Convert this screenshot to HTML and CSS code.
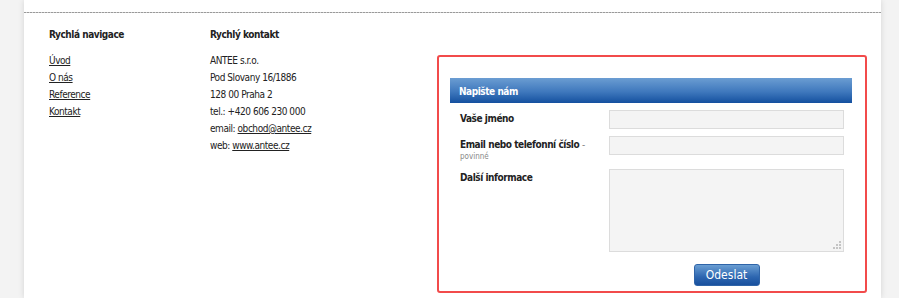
FILE: index.html
```html
<!DOCTYPE html>
<html lang="cs">
<head>
<meta charset="utf-8">
<title>Patička</title>
<link rel="stylesheet" href="styles.css">
</head>
<body>
<div class="page">
  <div class="rule"></div>
  <div class="footer">
    <div class="col col-nav">
      <h3 class="col-title">Rychlá navigace</h3>
      <ul class="list">
        <li><a href="#">Úvod</a></li>
        <li><a href="#">O nás</a></li>
        <li><a href="#">Reference</a></li>
        <li><a href="#">Kontakt</a></li>
      </ul>
    </div>
    <div class="col col-contact">
      <h3 class="col-title">Rychlý kontakt</h3>
      <ul class="list">
        <li>ANTEE s.r.o.</li>
        <li>Pod Slovany 16/1886</li>
        <li>128 00 Praha 2</li>
        <li>tel.: +420 606 230 000</li>
        <li>email: <a href="#">obchod@antee.cz</a></li>
        <li>web: <a href="#">www.antee.cz</a></li>
      </ul>
    </div>
    <div class="form-box">
      <div class="form-head">Napište nám</div>
      <form class="form">
        <label class="lbl" for="f1">Vaše jméno</label>
        <input class="inp" id="f1" type="text">
        <label class="lbl" for="f2">Email nebo telefonní číslo <span class="dash">-</span><span class="req">povinné</span></label>
        <input class="inp" id="f2" type="text">
        <label class="lbl" for="f3">Další informace</label>
        <div class="area-wrap">
          <textarea class="area" id="f3"></textarea>
          <svg class="grip" width="8" height="8" viewBox="0 0 8 8" aria-hidden="true">
            <rect x="6" y="0" width="2" height="2"/>
            <rect x="3" y="3" width="2" height="2"/>
            <rect x="6" y="3" width="2" height="2"/>
            <rect x="0" y="6" width="2" height="2"/>
            <rect x="3" y="6" width="2" height="2"/>
            <rect x="6" y="6" width="2" height="2"/>
          </svg>
        </div>
        <div class="actions"><button class="btn" type="button">Odeslat</button></div>
      </form>
    </div>
  </div>
</div>
</body>
</html>
```

FILE: styles.css
```css
html, body {
  margin: 0;
  padding: 0;
}
body {
  background: #f3f3f3;
  font-family: "DejaVu Sans Condensed", "DejaVu Sans", sans-serif;
  font-stretch: condensed;
  font-size: 10px;
  letter-spacing: -0.45px;
  color: #222;
  height: 298px;
  overflow: hidden;
}
.page {
  margin: 0 18px 0 24px;
  background: #fff;
  height: 298px;
  padding-top: 12px;
  box-sizing: border-box;
  box-shadow: 0 0 6px rgba(0, 0, 0, 0.13);
}
.rule {
  height: 1px;
  background: repeating-linear-gradient(to right, #9a9a9a 0 2px, #d0d0d0 2px 3px);
}
.footer {
  display: flex;
  padding: 0 14px 0 25px;
}
.col-nav { width: 161px; }
.col-contact { width: 200px; }
.col-title {
  margin: 13px 0 9px;
  font-size: 10px;
  font-weight: bold;
  line-height: 17px;
}
.list {
  list-style: none;
  margin: 0;
  padding: 0;
  line-height: 17px;
}
.list a { color: #222; text-decoration: underline; }
.form-box {
  margin: 42px 0 0 auto;
  width: 430px;
  box-sizing: border-box;
  border: 2px solid #f24b4b;
  border-radius: 3px;
  padding: 21px 13px 5px 11px;
}
.form-head {
  height: 25px;
  box-sizing: border-box;
  padding: 3px 0 0 9px;
  line-height: 22px;
  color: #fff;
  font-weight: bold;
  font-size: 10px;
  background: linear-gradient(#6b9dd2, #3f78bd 55%, #14509f);
  margin-bottom: 7px;
}
.form {
  display: grid;
  grid-template-columns: 159px 235px;
  row-gap: 7px;
}
.lbl {
  padding: 2px 0 0 10px;
  font-weight: bold;
  line-height: 13px;
}
.dash { font-weight: normal; color: #888; }
.req {
  display: block;
  font-weight: normal;
  font-size: 8px;
  letter-spacing: 0;
  line-height: 11px;
  color: #888;
}
.inp, .area {
  box-sizing: border-box;
  border: 1px solid #dcdcdc;
  background: #f4f4f4;
  margin: 0;
  padding: 0;
  width: 235px;
  display: block;
}
.inp { height: 19px; }
.area-wrap {
  position: relative;
  width: 235px;
  height: 83px;
}
.area { height: 83px; resize: none; }
.grip {
  position: absolute;
  right: 3px;
  bottom: 3px;
  fill: #c4c4c4;
}
.actions {
  grid-column: 2;
  display: flex;
  justify-content: center;
  margin-top: 5px;
}
.btn {
  width: 66px;
  height: 22px;
  padding: 0;
  border: 1px solid #2f64a8;
  border-radius: 3px;
  background: linear-gradient(#6a9ed3, #2d66b0 60%, #18509e);
  color: #fff;
  font-family: inherit;
  font-size: 12px;
  letter-spacing: 0;
}
```
